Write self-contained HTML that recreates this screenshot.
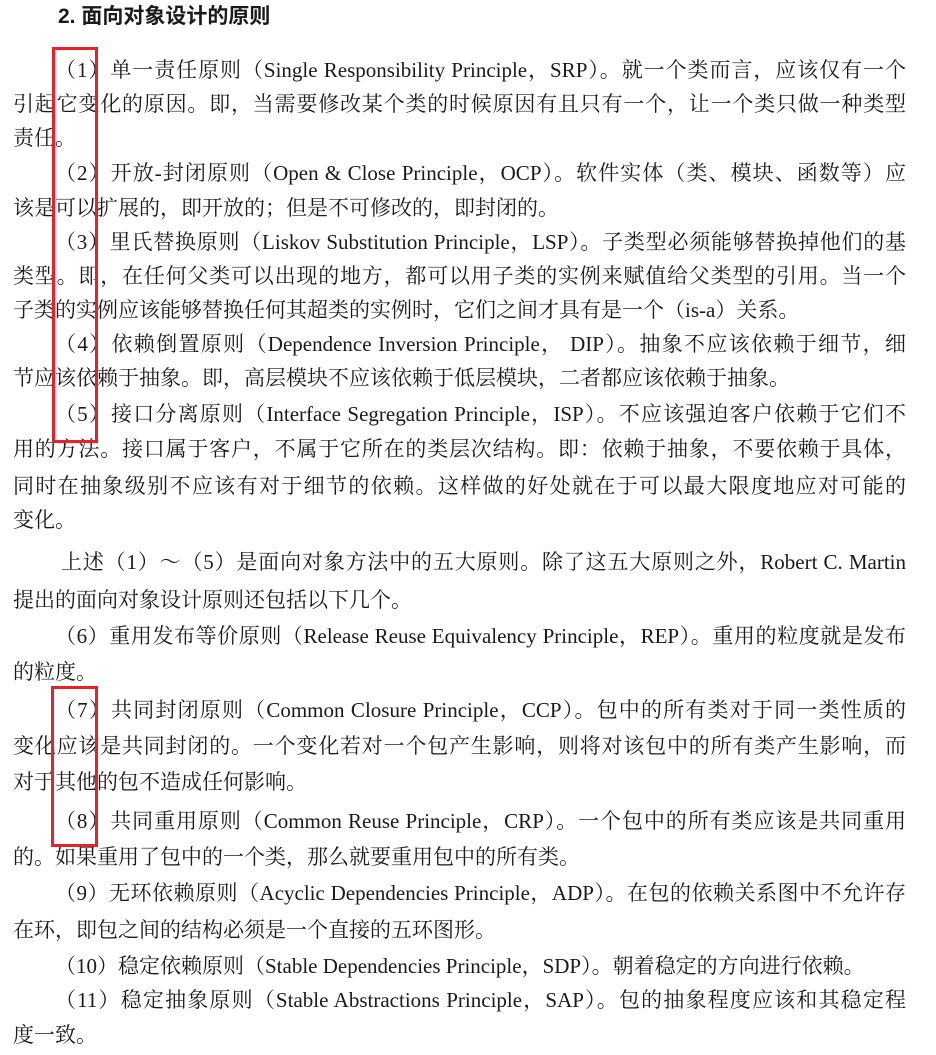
<!DOCTYPE html>
<html><head><meta charset="utf-8"><style>
html,body{margin:0;padding:0;background:#fff;}
body{width:936px;height:1055px;position:relative;overflow:hidden;font-family:"Liberation Serif","Noto Serif CJK SC",serif;font-size:21px;color:#1a1a1a;}
.l{position:absolute;left:13px;width:893px;height:30px;line-height:30px;white-space:nowrap;text-align:justify;text-align-last:justify;}
.i{left:55px;width:851px;}
.e{text-align-last:left;}
.h{position:absolute;left:58px;top:2px;font-family:"Liberation Sans","Noto Sans CJK SC",sans-serif;font-weight:bold;font-size:21px;line-height:30px;}
.box{position:absolute;border:3px solid #e8212b;}
</style></head><body>
<div class="h">2.&nbsp;面向对象设计的原则</div>
<div class="l i" style="top:55px">（1）单一责任原则（Single Responsibility Principle，SRP）。就一个类而言，应该仅有一个</div>
<div class="l" style="top:89px">引起它变化的原因。即，当需要修改某个类的时候原因有且只有一个，让一个类只做一种类型</div>
<div class="l e" style="top:123px">责任。</div>
<div class="l i" style="top:158px">（2）开放-封闭原则（Open &amp; Close Principle，OCP）。软件实体（类、模块、函数等）应</div>
<div class="l e" style="top:193px">该是可以扩展的，即开放的；但是不可修改的，即封闭的。</div>
<div class="l i" style="top:227px">（3）里氏替换原则（Liskov Substitution Principle，LSP）。子类型必须能够替换掉他们的基</div>
<div class="l" style="top:261px">类型。即，在任何父类可以出现的地方，都可以用子类的实例来赋值给父类型的引用。当一个</div>
<div class="l e" style="top:295px">子类的实例应该能够替换任何其超类的实例时，它们之间才具有是一个（is-a）关系。</div>
<div class="l i" style="top:329px">（4）依赖倒置原则（Dependence Inversion Principle， DIP）。抽象不应该依赖于细节，细</div>
<div class="l e" style="top:363px">节应该依赖于抽象。即，高层模块不应该依赖于低层模块，二者都应该依赖于抽象。</div>
<div class="l i" style="top:399px">（5）接口分离原则（Interface Segregation Principle，ISP）。不应该强迫客户依赖于它们不</div>
<div class="l" style="top:434px">用的方法。接口属于客户，不属于它所在的类层次结构。即：依赖于抽象，不要依赖于具体，</div>
<div class="l" style="top:471px">同时在抽象级别不应该有对于细节的依赖。这样做的好处就在于可以最大限度地应对可能的</div>
<div class="l e" style="top:505px">变化。</div>
<div class="l i" style="left:61px;width:845px;top:547px">上述（1）～（5）是面向对象方法中的五大原则。除了这五大原则之外，Robert C. Martin</div>
<div class="l e" style="top:585px">提出的面向对象设计原则还包括以下几个。</div>
<div class="l i" style="top:621px">（6）重用发布等价原则（Release Reuse Equivalency Principle，REP）。重用的粒度就是发布</div>
<div class="l e" style="top:657px">的粒度。</div>
<div class="l i" style="top:695px">（7）共同封闭原则（Common Closure Principle，CCP）。包中的所有类对于同一类性质的</div>
<div class="l" style="top:731px">变化应该是共同封闭的。一个变化若对一个包产生影响，则将对该包中的所有类产生影响，而</div>
<div class="l e" style="top:767px">对于其他的包不造成任何影响。</div>
<div class="l i" style="top:806px">（8）共同重用原则（Common Reuse Principle，CRP）。一个包中的所有类应该是共同重用</div>
<div class="l e" style="top:842px">的。如果重用了包中的一个类，那么就要重用包中的所有类。</div>
<div class="l i" style="top:878px">（9）无环依赖原则（Acyclic Dependencies Principle，ADP）。在包的依赖关系图中不允许存</div>
<div class="l e" style="top:915px">在环，即包之间的结构必须是一个直接的五环图形。</div>
<div class="l i e" style="top:951px">（10）稳定依赖原则（Stable Dependencies Principle，SDP）。朝着稳定的方向进行依赖。</div>
<div class="l i" style="top:985px">（11）稳定抽象原则（Stable Abstractions Principle，SAP）。包的抽象程度应该和其稳定程</div>
<div class="l e" style="top:1020px">度一致。</div>
<div class="box" style="left:52px;top:47px;width:40px;height:390px"></div>
<div class="box" style="left:51px;top:686px;width:41px;height:155px"></div>
</body></html>
